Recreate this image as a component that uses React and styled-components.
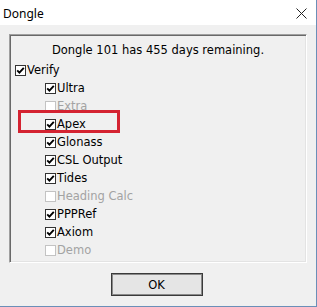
import React from "react";
import styled, { createGlobalStyle } from "styled-components";

const GlobalStyle = createGlobalStyle`
  html, body {
    margin: 0;
    padding: 0;
    background: #f0f0f0;
  }
`;

const options = [
  { label: "Ultra", checked: true },
  { label: "Extra", checked: false, disabled: true },
  { label: "Apex", checked: true },
  { label: "Glonass", checked: true },
  { label: "CSL Output", checked: true },
  { label: "Tides", checked: true },
  { label: "Heading Calc", checked: false, disabled: true },
  { label: "PPPRef", checked: true },
  { label: "Axiom", checked: true },
  { label: "Demo", checked: false, disabled: true },
];

const CheckBox = ({ checked, disabled }) => (
  <Box width="11" height="11" viewBox="0 0 11 11">
    <rect
      x="0.5"
      y="0.5"
      width="10"
      height="10"
      fill="#fff"
      stroke={disabled ? "#c3c3c3" : "#333"}
    />
    {checked && (
      <path
        d="M2.2 5.4 L4.4 7.6 L8.8 2.8"
        fill="none"
        stroke="#000"
        strokeWidth="1.9"
      />
    )}
  </Box>
);

const App = () => {
  return (
    <Window>
      <GlobalStyle />
      <TitleBar>
        <Title>Dongle</Title>
        <Close width="11" height="11" viewBox="0 0 11 11">
          <path d="M0.5 0.5 L10.5 10.5 M10.5 0.5 L0.5 10.5" stroke="#222" strokeWidth="1" />
        </Close>
      </TitleBar>

      <Body>
        <Panel>
          <Message>Dongle 101 has 455 days remaining.</Message>
          <Row>
            <CheckBox checked />
            <Label>Verify</Label>
          </Row>
          <SubList>
            {options.map((opt) => (
              <Row key={opt.label}>
                <CheckBox checked={opt.checked} disabled={opt.disabled} />
                <Label disabled={opt.disabled}>{opt.label}</Label>
              </Row>
            ))}
          </SubList>
          <Highlight />
        </Panel>

        <Footer>
          <Button>OK</Button>
        </Footer>
      </Body>
    </Window>
  );
};

const Window = styled.div`
  width: 317px;
  height: 307px;
  box-sizing: border-box;
  display: flex;
  flex-direction: column;
  background: #f0f0f0;
  border-right: 1px solid #6b8fb8;
  border-bottom: 1px solid #6b8fb8;
  font-family: "DejaVu Sans", sans-serif;
  font-size: 11.5px;
  color: #000;
`;

const TitleBar = styled.div`
  height: 25px;
  flex-shrink: 0;
  background: #fff;
  display: flex;
  align-items: center;
  justify-content: space-between;
  padding: 0 9px 0 3px;
`;

const Title = styled.span`
  font-family: "Noto Sans", sans-serif;
  font-size: 12px;
  color: #000;
  margin-top: 1px;
`;

const Close = styled.svg`
  display: block;
  margin-top: 1px;
`;

const Body = styled.div`
  flex: 1;
  display: flex;
  flex-direction: column;
  padding: 9px 9px 0 9px;
`;

const Panel = styled.div`
  position: relative;
  height: 229px;
  box-sizing: border-box;
  border-top: 1px solid #a0a0a0;
  border-left: 1px solid #a0a0a0;
  border-right: 1px solid #fff;
  border-bottom: 1px solid #fff;
  box-shadow: inset 1px 1px 0 #696969, inset -1px -1px 0 #e3e3e3;
  padding: 8px 0 0 5px;
`;

const Message = styled.div`
  text-align: center;
  line-height: 14px;
  margin-bottom: 4px;
  padding-right: 5px;
`;

const SubList = styled.div`
  padding-left: 30px;
`;

const Row = styled.div`
  display: flex;
  align-items: center;
  height: 18px;
  gap: 1px;
`;

const Box = styled.svg`
  display: block;
  flex-shrink: 0;
`;

const Label = styled.span`
  color: ${({ disabled }) => (disabled ? "#a3a3a3" : "#000")};
  line-height: 14px;
`;

const Highlight = styled.div`
  position: absolute;
  left: 8px;
  top: 75px;
  width: 102px;
  height: 23px;
  box-sizing: border-box;
  border: 3px solid #d42331;
`;

const Footer = styled.div`
  display: flex;
  justify-content: center;
  padding-top: 10px;
  padding-right: 3px;
`;

const Button = styled.button`
  width: 92px;
  height: 23px;
  box-sizing: border-box;
  background: #e5e5e5;
  border: 1px solid #3a3a3a;
  box-shadow: inset 0 0 0 1px #8a8a8a;
  font-family: "DejaVu Sans", sans-serif;
  font-size: 11.5px;
  color: #000;
  padding: 0;
`;

export default App;
